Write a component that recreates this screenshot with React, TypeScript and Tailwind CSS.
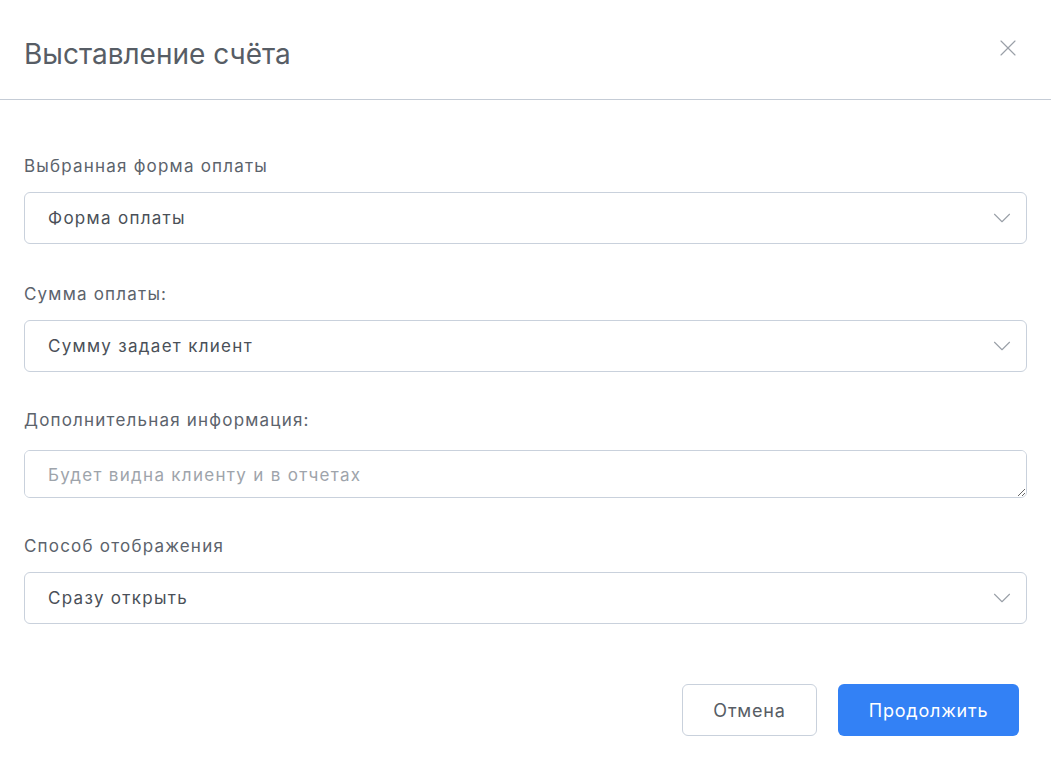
import { ChevronDown, X } from "lucide-react";

function Label({ children }: { children: React.ReactNode }) {
  return (
    <div className="text-[17px] leading-6 tracking-[1.2px] text-[#5c636c]">
      {children}
    </div>
  );
}

function Select({ value }: { value: string }) {
  return (
    <div className="flex h-[52px] items-center justify-between rounded-[6px] border border-[#c9d1dc] bg-white pl-[23px] pr-[9px]">
      <span className="pt-[2px] text-[17px] tracking-[1.3px] text-[#4a5058]">
        {value}
      </span>
      <ChevronDown size={30} strokeWidth={0.9} className="text-[#9aa0a8]" />
    </div>
  );
}

export default function App() {
  return (
    <div
      className="min-h-screen w-full bg-white"
      style={{ fontFamily: "Inter, 'Noto Sans', sans-serif" }}
    >
      {/* Header */}
      <div className="flex h-[100px] items-center justify-between border-b border-[#c5ccd6] pl-6 pr-[29px]">
        <h1 className="pt-2 text-[28px] font-normal text-[#575d65]">
          Выставление счёта
        </h1>
        <X size={28} strokeWidth={1} className="mb-1 text-[#9aa0a8]" />
      </div>

      {/* Body */}
      <div className="flex flex-col px-6 pt-[54px]">
        <div className="flex flex-col gap-[14px]">
          <Label>Выбранная форма оплаты</Label>
          <Select value="Форма оплаты" />
        </div>

        <div className="mt-[38px] flex flex-col gap-[14px]">
          <Label>Сумма оплаты:</Label>
          <Select value="Сумму задает клиент" />
        </div>

        <div className="mt-[36px] flex flex-col gap-[18px]">
          <Label>Дополнительная информация:</Label>
          <textarea
            rows={1}
            placeholder="Будет видна клиенту и в отчетах"
            className="block h-[48px] w-full rounded-[6px] border border-[#c9d1dc] bg-white px-[23px] py-3 text-[17px] tracking-[1.3px] text-[#4a5058] outline-none placeholder:text-[#9ea4ab]"
          />
        </div>

        <div className="mt-[36px] flex flex-col gap-[14px]">
          <Label>Способ отображения</Label>
          <Select value="Сразу открыть" />
        </div>

        <div className="mt-[60px] flex justify-end gap-[21px] pr-[8px]">
          <button className="h-[52px] w-[135px] rounded-[6px] border border-[#c9d1dc] bg-white text-[18px] tracking-[0.8px] text-[#575d65]">
            Отмена
          </button>
          <button className="h-[52px] w-[181px] rounded-[6px] bg-[#3381f5] text-[18px] tracking-[0.8px] text-white">
            Продолжить
          </button>
        </div>
      </div>
    </div>
  );
}
